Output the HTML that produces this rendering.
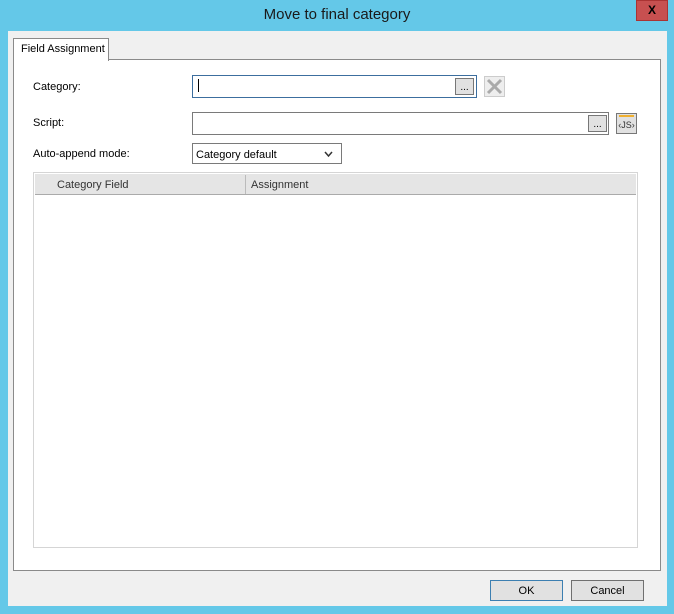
<!DOCTYPE html>
<html><head><style>
*{box-sizing:border-box;margin:0;padding:0}
body{width:674px;height:614px;background:#64c8e8;font-family:"Liberation Sans",sans-serif;font-size:12px;color:#000;position:relative;overflow:hidden}
.a{position:absolute}
.title{left:0;top:6px;width:674px;text-align:center;font-size:15px;color:#1a1a1a}
.close{left:636px;top:0;width:32px;height:21px;background:#c75050;border:1px solid #a33;color:#000;font-weight:bold;font-size:12px;text-align:center;line-height:19px}
.client{left:8px;top:31px;width:659px;height:575px;background:#f0f0f0}
.panel{left:13px;top:59px;width:648px;height:512px;background:#fff;border:1px solid #8a8a8a}
.tab{left:13px;top:38px;width:96px;height:23px;background:#fff;border:1px solid #8a8a8a;border-bottom:none;padding:4px 0 0 7px;font-size:11px}
.lbl{font-size:11px}
.box{background:#fff;border:1px solid #7a7a7a}
.dots{background:#e1e1e1;border:1px solid #777;font-size:10px;text-align:center;line-height:18px}
.btn{background:#e1e1e1;border:1px solid #adadad;text-align:center;line-height:20px;font-size:11px}
</style></head><body>
<div class="a title">Move to final category</div>
<div class="a close">X</div>
<div class="a client"></div>
<div class="a panel"></div>
<div class="a tab">Field Assignment</div>
<div class="a lbl" style="left:33px;top:81px">Category:</div>
<div class="a box" style="left:192px;top:75px;width:285px;height:23px;border-color:#3c6e9e"></div>
<div class="a" style="left:198px;top:79px;width:1px;height:13px;background:#000"></div>
<div class="a dots" style="left:455px;top:78px;width:19px;height:17px">...</div>
<div class="a" style="left:484px;top:76px;width:21px;height:21px;border:1px solid #ccc;background:#eee">
<svg width="19" height="19" viewBox="0 0 19 19"><path d="M3 3L16 16M16 3L3 16" stroke="#aaa" stroke-width="3"/></svg></div>
<div class="a lbl" style="left:33px;top:117px">Script:</div>
<div class="a box" style="left:192px;top:112px;width:417px;height:23px"></div>
<div class="a dots" style="left:588px;top:115px;width:19px;height:17px">...</div>
<div class="a" style="left:616px;top:113px;width:21px;height:21px;border:1px solid #777;background:#e1e1e1;font-size:9px;text-align:center;line-height:22px;color:#333">
<div style="position:absolute;left:2px;top:1px;width:15px;height:2px;background:#f0b030"></div>‹JS›</div>
<div class="a lbl" style="left:33px;top:148px">Auto-append mode:</div>
<div class="a box" style="left:192px;top:143px;width:150px;height:21px;font-size:11px;padding:5px 0 0 3px">Category default
<svg class="a" style="left:131px;top:7px" width="9" height="7"><path d="M1 1L4.5 5L8 1" stroke="#333" fill="none" stroke-width="1.5"/></svg></div>
<div class="a" style="left:33px;top:172px;width:605px;height:376px;border:1px solid #d5d5d5;background:#fff"></div>
<div class="a" style="left:35px;top:174px;width:601px;height:21px;background:#e5e5e5;border-bottom:1px solid #aaa"></div>
<div class="a" style="left:245px;top:175px;width:1px;height:19px;background:#bbb"></div>
<div class="a lbl" style="left:57px;top:179px;color:#333">Category Field</div>
<div class="a lbl" style="left:251px;top:179px;color:#333">Assignment</div>
<div class="a btn" style="left:490px;top:580px;width:73px;height:21px;border-color:#3c7fb1">OK</div>
<div class="a btn" style="left:571px;top:580px;width:73px;height:21px;border-color:#707070">Cancel</div>
</body></html>
